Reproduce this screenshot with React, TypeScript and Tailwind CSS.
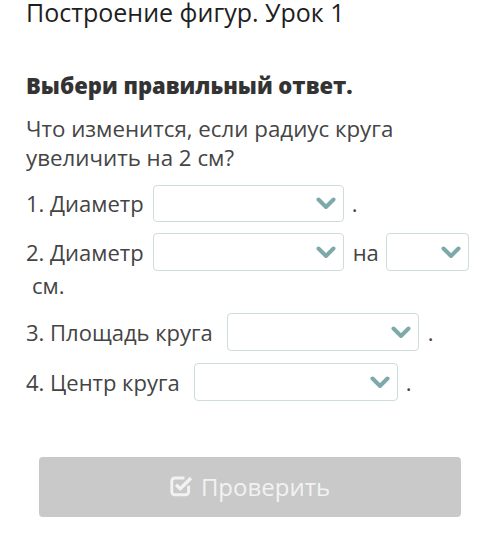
import React from "react";

function Chevron() {
  return (
    <svg width="20" height="13" viewBox="0 0 20 13" className="shrink-0">
      <path d="M2.5 2.5 L10 10 L17.5 2.5" fill="none" stroke="#7ea9ab" strokeWidth="4" strokeLinecap="round" strokeLinejoin="round" />
    </svg>
  );
}

function Select({ width, height = 37 }: { width: string; height?: number }) {
  return (
    <div
      className={`${width} ${height === 37 ? "h-[37px]" : "h-[38px]"} shrink-0 rounded-[4px] border border-[#cfdcdc] bg-white flex items-center justify-end pr-[7px]`}
    >
      <Chevron />
    </div>
  );
}

function CheckIcon() {
  return (
    <svg viewBox="0 0 20 18" className="w-[24px] h-[21.6px] shrink-0 -mt-[2px]">
      <path
        d="M15.5 9 V14 a2.5 2.5 0 0 1 -2.5 2.5 H4 a2.5 2.5 0 0 1 -2.5 -2.5 V5 a2.5 2.5 0 0 1 2.5 -2.5 H12"
        fill="none"
        stroke="#f2f2f2"
        strokeWidth="2.4"
      />
      <path d="M5 8 L8.5 11.5 L17.5 2.5" fill="none" stroke="#f2f2f2" strokeWidth="2.8" strokeLinejoin="round" />
    </svg>
  );
}

export default function App() {
  return (
    <div className="w-[500px] h-[559px] bg-white overflow-hidden font-['Open_Sans',sans-serif]">
      <div className="pl-[26px]">
        {/* Title */}
        <h1 className="text-[25px] leading-[25px] text-[#1e1e1e]">
          Построение фигур. Урок 1
        </h1>

        {/* Heading */}
        <h2 className="mt-[47px] text-[22px] leading-[26px] font-extrabold text-[#333]">
          Выбери правильный ответ.
        </h2>

        {/* Question */}
        <p className="mt-[16px] text-[22.3px] leading-[29px] text-[#454545]">
          Что изменится, если радиус круга
          <br />
          увеличить на 2 см?
        </p>

        {/* Row 1 */}
        <div className="mt-[13px] flex items-center text-[22px] leading-[29px] text-[#444]">
          <span>1. Диаметр</span>
          <div className="ml-[9px]">
            <Select width="w-[191px]" />
          </div>
          <span className="ml-[8px]">.</span>
        </div>

        {/* Row 2 */}
        <div className="mt-[11px] flex items-center text-[22px] leading-[29px] text-[#444]">
          <span>2. Диаметр</span>
          <div className="ml-[9px]">
            <Select width="w-[191px]" height={38} />
          </div>
          <span className="ml-[9px]">на</span>
          <div className="ml-[7px]">
            <Select width="w-[83px]" height={38} />
          </div>
        </div>
        <div className="pl-[6px] text-[22px] leading-[29px] text-[#444]">см.</div>

        {/* Row 3 */}
        <div className="mt-[13px] flex items-center text-[22px] leading-[29px] text-[#444]">
          <span>3. Площадь круга</span>
          <div className="ml-[14px]">
            <Select width="w-[192px]" height={38} />
          </div>
          <span className="ml-[9px]">.</span>
        </div>

        {/* Row 4 */}
        <div className="mt-[12px] flex items-center text-[22px] leading-[29px] text-[#444]">
          <span>4. Центр круга</span>
          <div className="ml-[14px]">
            <Select width="w-[204px]" height={38} />
          </div>
          <span className="ml-[8px]">.</span>
        </div>
      </div>

      {/* Check button */}
      <div className="mt-[56px] px-[39px]">
        <button className="w-[422px] h-[60px] rounded-[4px] bg-[#c9c9c9] flex items-center justify-center gap-[7px] text-[24px] text-[#f2f2f2]">
          <CheckIcon />
          <span>Проверить</span>
        </button>
      </div>
    </div>
  );
}
